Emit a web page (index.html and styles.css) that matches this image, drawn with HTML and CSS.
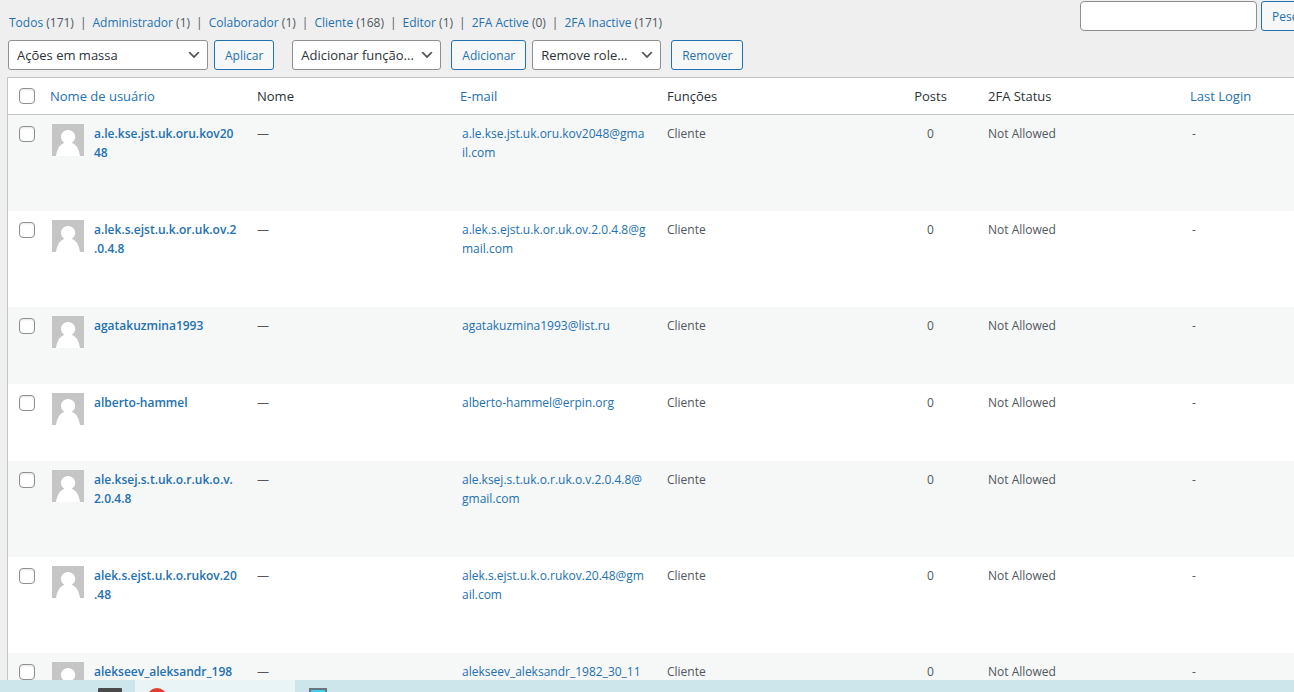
FILE: index.html
```
<!DOCTYPE html>
<html lang="pt-BR">
<head>
    <meta charset="UTF-8">
    <title>Usuários</title>
    <link rel="stylesheet" href="styles.css">
</head>
<body>
<svg class="defs" width="0" height="0">
    <symbol id="avatar" viewBox="0 0 32 32">
        <rect width="32" height="32" fill="#c5c5c5"></rect>
        <path fill="#fff" d="M4 32C5 25 8 20.500 12.500 18.800C10.300 17.500 9 15.500 9 13C9 9 12 6 16 6S23.200 9 23.200 13C23.200 15.500 22 17.500 19.600 18.800C24.200 20.500 27 25 28 32Z"></path>
    </symbol>
</svg>
<div class="wrap">
    <div class="top">
        <ul class="filters">
            <li><a href="#">Todos <span>(171)</span></a></li>
            <li><a href="#">Administrador <span>(1)</span></a></li>
            <li><a href="#">Colaborador <span>(1)</span></a></li>
            <li><a href="#">Cliente <span>(168)</span></a></li>
            <li><a href="#">Editor <span>(1)</span></a></li>
            <li><a href="#">2FA Active <span>(0)</span></a></li>
            <li><a href="#">2FA Inactive <span>(171)</span></a></li>
        </ul>
        <form class="search">
            <input type="search" aria-label="Pesquisar usuários">
            <button type="button" class="btn">Pesquisar</button>
        </form>
    </div>
    <div class="actions">
        <div class="group bulk">
            <select aria-label="Ações em massa"><option>Ações em massa</option></select>
            <button type="button" class="btn">Aplicar</button>
        </div>
        <div class="group add">
            <select aria-label="Adicionar função"><option>Adicionar função...</option></select>
            <button type="button" class="btn">Adicionar</button>
        </div>
        <div class="group remove">
            <select aria-label="Remove role"><option>Remove role...</option></select>
            <button type="button" class="btn">Remover</button>
        </div>
    </div>
    <table class="users">
        <colgroup>
            <col class="c-check"><col class="c-user"><col class="c-name"><col class="c-email"><col class="c-role"><col class="c-posts"><col class="c-status"><col class="c-login">
        </colgroup>
        <thead>
        <tr>
            <th class="check"><input type="checkbox" aria-label="Selecionar todos"></th>
            <th class="sort"><a href="#">Nome de usuário</a></th>
            <th>Nome</th>
            <th class="sort"><a href="#">E-mail</a></th>
            <th>Funções</th>
            <th class="num">Posts</th>
            <th>2FA Status</th>
            <th class="sort"><a href="#">Last Login</a></th>
        </tr>
        </thead>
        <tbody>
        <tr>
            <td class="check"><input type="checkbox" aria-label="Selecionar a.le.kse.jst.uk.oru.kov2048"></td>
            <td class="user"><div><svg><use href="#avatar"></use></svg><a href="#">a.le.kse.jst.uk.oru.kov20<br>48</a></div></td>
            <td>—</td>
            <td><a href="#">a.le.kse.jst.uk.oru.kov2048@gma<br>il.com</a></td>
            <td>Cliente</td>
            <td class="num">0</td>
            <td>Not Allowed</td>
            <td>-</td>
        </tr>
        <tr>
            <td class="check"><input type="checkbox" aria-label="Selecionar a.lek.s.ejst.u.k.or.uk.ov.2.0.4.8"></td>
            <td class="user"><div><svg><use href="#avatar"></use></svg><a href="#">a.lek.s.ejst.u.k.or.uk.ov.2<br>.0.4.8</a></div></td>
            <td>—</td>
            <td><a href="#">a.lek.s.ejst.u.k.or.uk.ov.2.0.4.8@g<br>mail.com</a></td>
            <td>Cliente</td>
            <td class="num">0</td>
            <td>Not Allowed</td>
            <td>-</td>
        </tr>
        <tr>
            <td class="check"><input type="checkbox" aria-label="Selecionar agatakuzmina1993"></td>
            <td class="user"><div><svg><use href="#avatar"></use></svg><a href="#">agatakuzmina1993</a></div></td>
            <td>—</td>
            <td><a href="#">agatakuzmina1993@list.ru</a></td>
            <td>Cliente</td>
            <td class="num">0</td>
            <td>Not Allowed</td>
            <td>-</td>
        </tr>
        <tr>
            <td class="check"><input type="checkbox" aria-label="Selecionar alberto-hammel"></td>
            <td class="user"><div><svg><use href="#avatar"></use></svg><a href="#">alberto-hammel</a></div></td>
            <td>—</td>
            <td><a href="#">alberto-hammel@erpin.org</a></td>
            <td>Cliente</td>
            <td class="num">0</td>
            <td>Not Allowed</td>
            <td>-</td>
        </tr>
        <tr>
            <td class="check"><input type="checkbox" aria-label="Selecionar ale.ksej.s.t.uk.o.r.uk.o.v.2.0.4.8"></td>
            <td class="user"><div><svg><use href="#avatar"></use></svg><a href="#">ale.ksej.s.t.uk.o.r.uk.o.v.<br>2.0.4.8</a></div></td>
            <td>—</td>
            <td><a href="#">ale.ksej.s.t.uk.o.r.uk.o.v.2.0.4.8@<br>gmail.com</a></td>
            <td>Cliente</td>
            <td class="num">0</td>
            <td>Not Allowed</td>
            <td>-</td>
        </tr>
        <tr>
            <td class="check"><input type="checkbox" aria-label="Selecionar alek.s.ejst.u.k.o.rukov.20.48"></td>
            <td class="user"><div><svg><use href="#avatar"></use></svg><a href="#">alek.s.ejst.u.k.o.rukov.20<br>.48</a></div></td>
            <td>—</td>
            <td><a href="#">alek.s.ejst.u.k.o.rukov.20.48@gm<br>ail.com</a></td>
            <td>Cliente</td>
            <td class="num">0</td>
            <td>Not Allowed</td>
            <td>-</td>
        </tr>
        <tr>
            <td class="check"><input type="checkbox" aria-label="Selecionar alekseev_aleksandr_198"></td>
            <td class="user"><div><svg><use href="#avatar"></use></svg><a href="#">alekseev_aleksandr_198</a></div></td>
            <td>—</td>
            <td><a href="#">alekseev_aleksandr_1982_30_11</a></td>
            <td>Cliente</td>
            <td class="num">0</td>
            <td>Not Allowed</td>
            <td>-</td>
        </tr>
        </tbody>
    </table>
</div>
<div class="taskbar">
    <svg width="330" height="12" viewBox="0 0 330 12">
        <rect x="135" width="160" height="12" fill="#e9f4f7"></rect>
        <rect x="98" y="8" width="24" height="6" rx="1" fill="#4a4a4a"></rect>
        <circle cx="157" cy="18" r="10" fill="#e33b2e"></circle>
        <rect x="309" y="8" width="18" height="6" fill="#68777f"></rect>
        <rect x="311" y="10" width="14" height="4" fill="#3fcdf0"></rect>
    </svg>
</div>
</body>
</html>
```
FILE: styles.css
```
*{
    box-sizing: border-box;
}
html{
    height: 100%;
    overflow: hidden;
}
body{
    height: 100%;
    margin: 0;
    overflow: hidden;
    background: #efefef;
    color: #50575e;
    font-family: "Segoe UI", "Open Sans", "Noto Sans", sans-serif;
    font-size: 12px;
    line-height: 19px;
}
a{
    color: #2271b1;
    text-decoration: none;
}
.defs{
    position: absolute;
}
.wrap{
    padding: 1px 0 0 7px;
}
.top{
    display: flex;
    justify-content: space-between;
    height: 39px;
}
.filters{
    display: flex;
    margin: 0;
    padding: 12px 0 0 2px;
    list-style: none;
    white-space: nowrap;
}
.filters li + li::before{
    content: "|";
    margin: 0 6px;
}
.filters span{
    color: #50575e;
}
.search{
    display: flex;
    flex: none;
    gap: 4px;
    width: 214px;
}
.search input{
    flex: none;
    width: 177px;
    height: 30px;
    border: 1px solid #8c8f94;
    border-radius: 4px;
    background: #fff;
}
.btn{
    flex: none;
    height: 30px;
    padding: 0 10px;
    border: 1px solid #2271b1;
    border-radius: 3px;
    background: #f6f7f7;
    color: #2271b1;
    font-family: inherit;
    font-size: 12px;
}
.actions{
    display: flex;
    padding-left: 1px;
}
.group{
    display: flex;
    gap: 10px;
    margin-right: 6px;
}
.bulk{
    gap: 6px;
    margin-right: 18px;
}
.group select{
    width: 129px;
    height: 30px;
    padding: 0 24px 0 8px;
    border: 1px solid #8c8f94;
    border-radius: 3px;
    appearance: none;
    background: #fff url('data:image/svg+xml,%3Csvg xmlns="http://www.w3.org/2000/svg" viewBox="0 0 20 20"%3E%3Cpath d="M5 6l5 5 5-5 2 1-7 7-7-7 2-1z" fill="%23555"/%3E%3C/svg%3E') no-repeat right 5px center;
    background-size: 16px 16px;
    color: #2c3338;
    font-family: inherit;
    font-size: 13px;
}
.group.bulk select{
    width: 200px;
}
.group.add select{
    width: 149px;
}
.users{
    width: 100%;
    margin-top: 7px;
    border: 1px solid #c3c4c7;
    border-right: none;
    border-spacing: 0;
    table-layout: fixed;
    background: #fff;
}
/* column shares, scaled to the table width */
.c-check{ width: 34px; }
.c-user, .c-name, .c-email{ width: 205px; }
.c-role{ width: 226px; }
.c-posts{ width: 95px; }
.c-status{ width: 204px; }
.c-login{ width: 112px; }
.users th{
    height: 37px;
    padding: 0 10px;
    border-bottom: 1px solid #c3c4c7;
    color: #2c3338;
    font-size: 13px;
    font-weight: 400;
    text-align: left;
    white-space: nowrap;
}
.users .sort{
    padding-left: 8px;
}
.users td{
    padding: 9px 10px 0;
    vertical-align: top;
    white-space: nowrap;
}
.users tbody tr:nth-child(odd){
    background: #f6f7f7;
}
.users .num{
    padding-left: 0;
    padding-right: 0;
    text-align: center;
}
.users .check{
    padding-left: 11px;
    padding-right: 0;
}
.check input{
    display: block;
    width: 16px;
    height: 16px;
    margin: 0;
    border: 1px solid #8c8f94;
    border-radius: 4px;
    appearance: none;
    background: #fff;
    box-shadow: inset 0 1px 2px rgba(0, 0, 0, 0.1);
}
td.check input{
    margin-top: 2px;
}
.users .user{
    padding-bottom: 49px;
}
.user div{
    display: flex;
    gap: 10px;
}
.user svg{
    flex: none;
    width: 32px;
    height: 32px;
    margin-bottom: -13px;
}
.user a{
    font-weight: 600;
}
.taskbar{
    position: fixed;
    left: 0;
    right: 0;
    bottom: 0;
    height: 12px;
    background: #cde6ec;
}
.taskbar svg{
    display: block;
}
```
